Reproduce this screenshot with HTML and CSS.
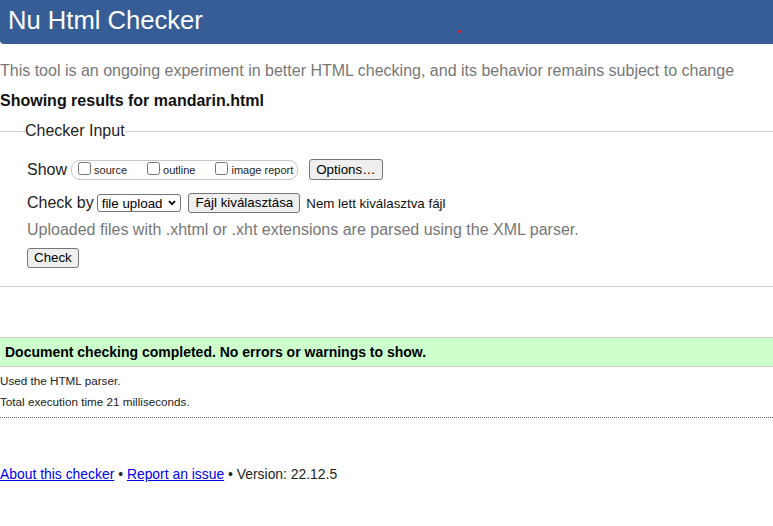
FILE: index.html
```html
<!DOCTYPE html>
<html lang="en">
<head>
<meta charset="utf-8">
<title>Nu Html Checker</title>
<link rel="stylesheet" href="styles.css">
</head>
<body>
<h1 class="masthead">Nu Html Checker<span class="dot"></span></h1>
<p class="lead">This tool is an ongoing experiment in better HTML checking, and its behavior remains subject to change</p>
<p class="showing">Showing results for mandarin.html</p>
<fieldset class="checker">
  <legend class="legend">Checker Input</legend>
  <div class="row row-show">
    <span class="label">Show</span>
    <span class="opts">
      <label class="opt"><input type="checkbox" class="cb"><span class="opt-text">source</span></label>
      <label class="opt"><input type="checkbox" class="cb"><span class="opt-text">outline</span></label>
      <label class="opt"><input type="checkbox" class="cb"><span class="opt-text">image report</span></label>
    </span>
    <button type="button" class="btn btn-options">Options…</button>
  </div>
  <div class="row row-by">
    <span class="label">Check by</span>
    <span class="select"><span class="select-text">file upload</span><svg class="chev" width="8" height="6" viewBox="0 0 8 6"><polyline points="1,1 4,4.2 7,1" fill="none" stroke="#000" stroke-width="1.8"/></svg></span>
    <button type="button" class="btn btn-file">Fájl kiválasztása</button>
    <span class="nofile">Nem lett kiválasztva fájl</span>
  </div>
  <p class="hint">Uploaded files with .xhtml or .xht extensions are parsed using the XML parser.</p>
  <div class="row row-submit">
    <button type="button" class="btn">Check</button>
  </div>
</fieldset>
<div class="success">Document checking completed. No errors or warnings to show.</div>
<p class="details details-first">Used the HTML parser.</p>
<p class="details">Total execution time 21 milliseconds.</p>
<hr class="dotted">
<p class="footer"><a href="#" class="link">About this checker</a> • <a href="#" class="link">Report an issue</a> • Version: 22.12.5</p>
</body>
</html>
```

FILE: styles.css
```css
html, body {
  background: #fff;
}
body {
  margin: 0;
  font-family: "Liberation Sans", Arial, sans-serif;
  font-size: 16px;
  color: #222;
}
.masthead {
  position: relative;
  margin: 0;
  height: 44px;
  box-sizing: border-box;
  padding: 5px 0 9px 8px;
  background: #365d95;
  color: #fff;
  font-size: 25.6px;
  font-weight: normal;
  line-height: 30px;
  border-bottom-left-radius: 4px;
}
.dot {
  position: absolute;
  left: 458px;
  top: 30px;
  width: 3px;
  height: 3px;
  border-radius: 50%;
  background: #e0211d;
}
.lead {
  margin: 17px 0 0;
  line-height: 20px;
  color: #777;
}
.showing {
  margin: 10px 0 0;
  line-height: 20px;
  font-weight: bold;
  color: #111;
}
.checker {
  margin: 10px 0 0;
  min-width: 0;
  border: none;
  border-top: 1px solid #ccc;
  border-bottom: 1px solid #ccc;
  padding: 18px 0 18px 27px;
}
.legend {
  padding: 0;
  margin-left: -2px;
  line-height: 20px;
  color: #222;
}
.row {
  display: flex;
  align-items: center;
}
.row-show {
  height: 21px;
}
.row-by {
  height: 20px;
  margin-top: 13px;
}
.row-submit {
  height: 20px;
  margin-top: 8px;
}
.label {
  line-height: 20px;
}
.opts {
  display: inline-flex;
  align-items: center;
  gap: 16px;
  height: 20px;
  box-sizing: border-box;
  margin-left: 4px;
  padding: 0 4px 0 2px;
  border: 1px solid #c6c6c6;
  border-radius: 9px;
}
.opt {
  display: inline-flex;
  align-items: center;
}
.cb {
  width: 13px;
  height: 13px;
  margin: 0 3px 3px 4px;
}
.opt-text {
  font-size: 11px;
  line-height: 13px;
  padding-top: 2px;
}
.btn {
  font-family: "Liberation Sans", Arial, sans-serif;
  font-size: 13.33px;
  color: #000;
  height: 20px;
  box-sizing: border-box;
  padding: 0 6px;
  border: 1px solid #767676;
  border-radius: 3px;
  background: #efefef;
  line-height: 16px;
}
.btn-options {
  height: 21px;
  margin-left: 11px;
}
.select {
  display: inline-flex;
  align-items: center;
  gap: 6px;
  height: 18px;
  box-sizing: border-box;
  margin-left: 3px;
  padding: 0 4px;
  border: 1px solid #767676;
  border-radius: 3px;
  font-size: 13.33px;
  color: #000;
}
.chev {
  display: block;
}
.btn-file {
  margin-left: 7px;
}
.nofile {
  margin-left: 6px;
  font-size: 13.33px;
  color: #111;
}
.hint {
  margin: 7px 0 0;
  line-height: 20px;
  color: #777;
}
.success {
  margin-top: 50px;
  border-top: 1px solid #ccc;
  border-bottom: 1px solid #ccc;
  background: #ccffcc;
  padding: 6px 0 6px 5px;
  font-size: 14px;
  line-height: 16px;
  font-weight: bold;
  color: #000;
}
.details {
  margin: 6px 0 0;
  font-size: 11.7px;
  line-height: 15px;
  color: #222;
}
.dotted {
  margin: 8px 0 0;
  height: 0;
  border: none;
  border-top: 1px dotted #666;
}
.footer {
  margin: 48px 0 0;
  font-size: 13.9px;
  line-height: 17px;
  color: #222;
}
.link {
  color: #0000ee;
  text-decoration: underline;
}
```
